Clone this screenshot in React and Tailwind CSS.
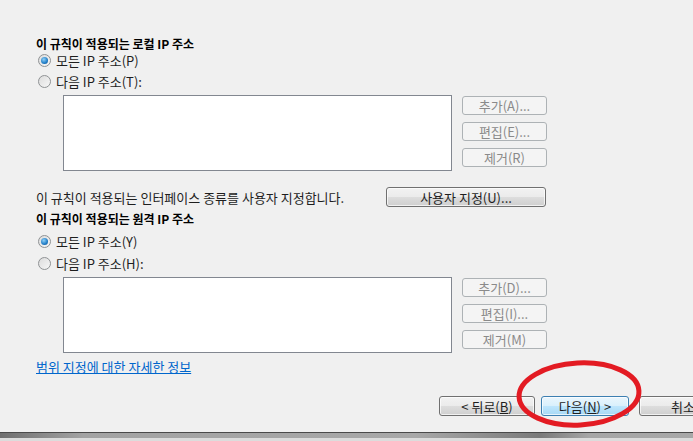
import React from "react";

const font = { fontFamily: '"Noto Sans CJK KR", "Liberation Sans", sans-serif' };

function Radio({ checked, label }) {
  return (
    <div className="flex items-center h-[18px]">
      <span className="w-[13px] h-[13px] rounded-full border border-[#8f9294] bg-[linear-gradient(135deg,#dcdcdc,#f7f7f7)] flex items-center justify-center ml-[2px]">
        {checked && (
          <span className="w-[7px] h-[7px] rounded-full bg-[radial-gradient(circle_at_40%_35%,#8fd0f7,#1f7cc6_60%,#0d4f8f)]" />
        )}
      </span>
      <span className="ml-[5px] text-[13px] leading-none text-[#1e1e1e]">{label}</span>
    </div>
  );
}

function DisabledButton({ children }) {
  return (
    <div className="w-[85px] h-[19px] rounded-[3px] border border-[#adb2b5] bg-[#f4f4f4] flex items-center justify-center text-[13px] leading-none text-[#8a8a8a]">
      {children}
    </div>
  );
}

function WinButton({ children, width, primary }) {
  const base = primary
    ? "border-[#3c7fb1] bg-[linear-gradient(#eaf6fd_0%,#d9f0fc_50%,#bee6fd_51%,#a7d9f5_100%)]"
    : "border-[#707070] bg-[linear-gradient(#f2f2f2_0%,#ebebeb_50%,#dddddd_51%,#cfcfcf_100%)]";
  return (
    <div
      className={`${width} h-[20px] rounded-[3px] border ${base} shadow-[inset_0_0_0_1px_rgba(255,255,255,0.7)] flex items-center justify-center text-[13px] leading-none text-[#1e1e1e] shrink-0`}
    >
      {children}
    </div>
  );
}

function ListWithButtons({ labels }) {
  return (
    <div className="flex">
      <div className="ml-[27px] w-[389px] h-[76px] bg-white border border-[#828790]" />
      <div className="ml-[10px] mt-[1px] flex flex-col gap-[7px]">
        {labels.map((l) => (
          <DisabledButton key={l}>{l}</DisabledButton>
        ))}
      </div>
    </div>
  );
}

export default function App() {
  return (
    <div
      className="relative w-[693px] h-[441px] overflow-hidden bg-[#f0f0f0] flex flex-col"
      style={font}
    >
      <div className="pl-[36px] flex flex-col">
        {/* 로컬 IP */}
        <div className="mt-[37px] h-[14px] flex items-center text-[12px] font-bold leading-none text-black">
          이 규칙이 적용되는 로컬 IP 주소
        </div>
        <Radio checked label="모든 IP 주소(P)" />
        <div className="mt-[3px]">
          <Radio label="다음 IP 주소(T):" />
        </div>
        <div className="mt-[5px]">
          <ListWithButtons labels={["추가(A)...", "편집(E)...", "제거(R)"]} />
        </div>

        {/* 인터페이스 종류 */}
        <div className="mt-[16px] w-[510px] flex items-center justify-between">
          <span className="text-[13px] leading-none text-[#1e1e1e]">
            이 규칙이 적용되는 인터페이스 종류를 사용자 지정합니다.
          </span>
          <WinButton width="w-[160px]">사용자 지정(U)...</WinButton>
        </div>

        {/* 원격 IP */}
        <div className="mt-[5px] h-[14px] flex items-center text-[12px] font-bold leading-none text-black">
          이 규칙이 적용되는 원격 IP 주소
        </div>
        <div className="mt-[6px]">
          <Radio checked label="모든 IP 주소(Y)" />
        </div>
        <div className="mt-[4px]">
          <Radio label="다음 IP 주소(H):" />
        </div>
        <div className="mt-[5px]">
          <ListWithButtons labels={["추가(D)...", "편집(I)...", "제거(M)"]} />
        </div>

        <div className="mt-[6px] h-[14px] flex items-center">
          <a className="text-[13px] leading-none text-[#0066cc] underline cursor-pointer">
            범위 지정에 대한 자세한 정보
          </a>
        </div>

        {/* 하단 버튼 */}
        <div className="mt-[23px] ml-[403px] flex gap-[6px]">
          <WinButton width="w-[96px]">
            &lt; 뒤로(<span className="underline">B</span>)
          </WinButton>
          <WinButton width="w-[88px]" primary>
            다음(<span className="underline">N</span>) &gt;
          </WinButton>
          <div className="ml-[4px]">
            <WinButton width="w-[88px]">취소</WinButton>
          </div>
        </div>
      </div>

      {/* 하단 바 */}
      <div className="mt-auto">
        <div className="h-[1px] bg-[#4a4a4a]" />
        <div className="h-[5px] bg-[linear-gradient(to_right,#6e6e6e,#a3a3a3_12%,#a8a8a8_60%,#7a7a7a_78%,#a6a6a6_85%,#a8a8a8)]" />
        <div className="h-[3px] bg-[#dcdcdc]" />
      </div>

      {/* 빨간 동그라미 */}
      <svg
        className="absolute left-[513px] top-[357px] w-[132px] h-[74px] pointer-events-none"
        viewBox="0 0 132 74"
      >
        <ellipse
          cx="66"
          cy="37"
          rx="60"
          ry="31"
          fill="none"
          stroke="#e31b23"
          strokeWidth="5"
          transform="rotate(-3 66 37)"
        />
      </svg>
    </div>
  );
}
